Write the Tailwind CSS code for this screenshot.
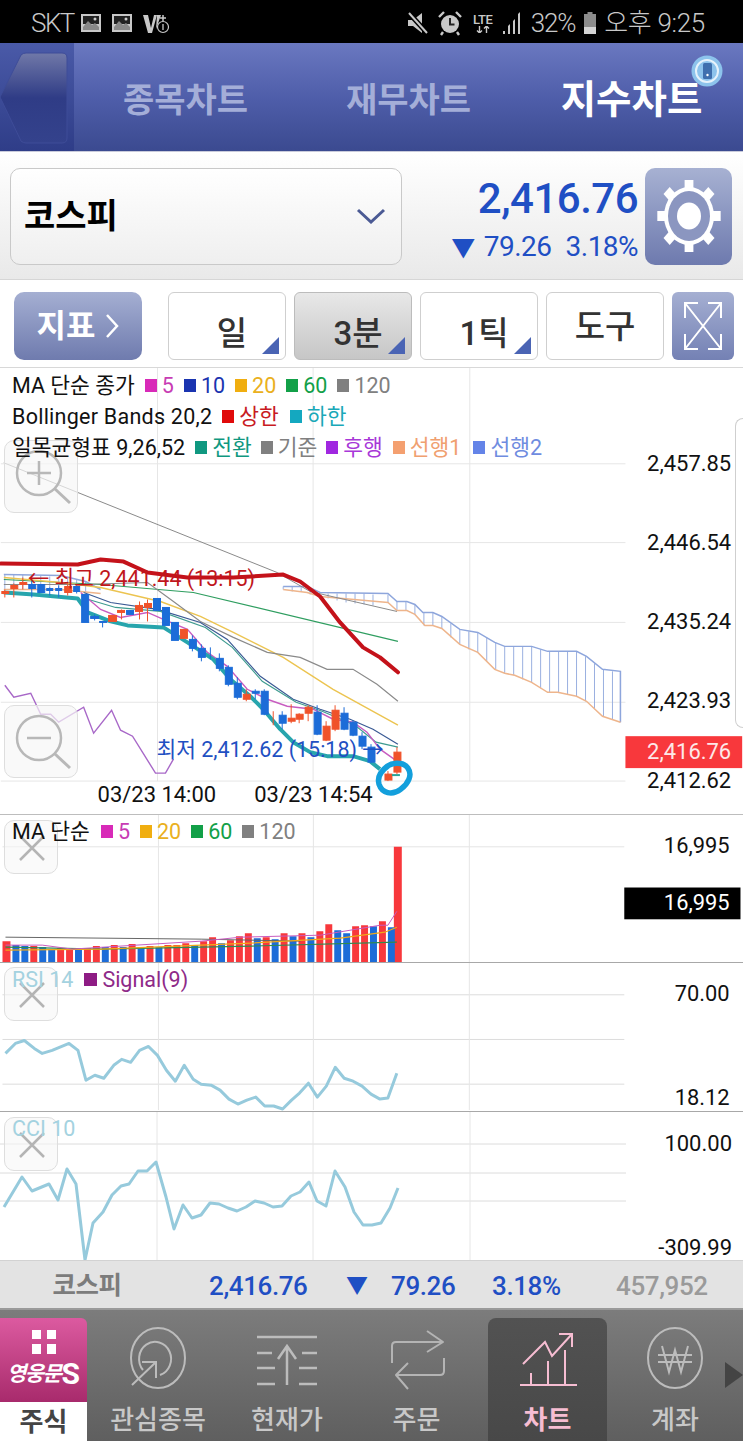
<!DOCTYPE html>
<html lang="ko">
<head>
<meta charset="utf-8">
<script src="https://cdn.jsdelivr.net/npm/@tailwindcss/browser@4"></script>
</head>
<body>
<div class="w-[743px] h-[1441px] overflow-hidden flex flex-col bg-white font-['Roboto','Noto_Sans_CJK_KR',sans-serif] relative">

  <!-- status bar -->
  <div class="h-[43px] bg-black flex items-center justify-between pl-[31px] pr-[38px] pt-[3px] text-[#c8c8c8] text-[26px] shrink-0">
    <div class="flex items-center gap-[6px]">
      <span class="tracking-[-1.500px] font-light">SKT</span>
      <svg width="22" height="20" viewBox="0 0 22 20"><rect x="1" y="1" width="20" height="18" fill="#c8c8c8"/><rect x="3" y="3" width="16" height="8" fill="#222"/><path d="M3 14l5-6 4 4 3-2 4 4v3H3z" fill="#888"/><circle cx="15" cy="6" r="1.500" fill="#ccc"/></svg>
      <svg class="ml-[3px]" width="22" height="20" viewBox="0 0 22 20"><rect x="1" y="1" width="20" height="18" fill="#c8c8c8"/><rect x="3" y="3" width="16" height="8" fill="#222"/><path d="M3 14l5-6 4 4 3-2 4 4v3H3z" fill="#888"/><circle cx="15" cy="6" r="1.500" fill="#ccc"/></svg>
      <svg class="ml-[3px]" width="30" height="24" viewBox="0 0 30 24"><path d="M1 4h5l3 13 3-13h3l-5 18H6z" fill="#c8c8c8"/><path d="M15 4h4l-5 14z" fill="#c8c8c8"/><path d="M21 4v6M18 7h6" stroke="#c8c8c8" stroke-width="1.500"/><circle cx="21" cy="16" r="5.500" fill="none" stroke="#c8c8c8" stroke-width="1.200"/><path d="M21 13v6" stroke="#c8c8c8" stroke-width="1.300"/></svg>
    </div>
    <div class="flex items-center">
      <svg width="24" height="24" viewBox="0 0 24 24"><path d="M2 9h5l9-7v20l-9-7H2z" fill="#c8c8c8"/><path d="M2 1l20 22" stroke="#000" stroke-width="5"/><path d="M3 2l18 20" stroke="#c8c8c8" stroke-width="2"/></svg>
      <svg class="ml-[8px]" width="24" height="26" viewBox="0 0 24 26"><circle cx="12" cy="14" r="9" fill="#c8c8c8"/><path d="M12 8v6.500h4.500" stroke="#222" stroke-width="2" fill="none"/><path d="M1 7l5-5M23 7l-5-5M5 22l-2 3M19 22l2 3" stroke="#c8c8c8" stroke-width="2.400"/></svg>
      <div class="ml-[9px] w-[24px] flex flex-col items-center leading-none">
        <span class="text-[13px] font-medium tracking-[-.5px]">LTE</span>
        <svg width="14" height="7" viewBox="0 0 14 7"><path d="M3.500 0v7M1 4.500l2.500 2.500 2.500-2.500M10.500 7V0M8 2.500L10.500 0 13 2.500" stroke="#c8c8c8" fill="none" stroke-width="1.400"/></svg>
      </div>
      <svg class="ml-[7px]" width="20" height="24" viewBox="0 0 20 24"><path d="M1 20h2v3H1zM6 15l2-2v10H6zM11 10l2-2v15h-2zM16 3l2-2v22h-2z" fill="#c8c8c8"/></svg>
      <span class="ml-[9px] tracking-[-1.200px] font-light">32%</span>
      <svg class="ml-[8px]" width="14" height="24" viewBox="0 0 14 24"><path d="M4.500 1h5v2h3.500v20H1V3h3.500z" fill="#8c8c8c"/><rect x="1" y="16" width="12" height="7" fill="#d4d4d4"/></svg>
      <span class="ml-[7px] tracking-[-.3px] font-light">오후 9:25</span>
    </div>
  </div>

  <!-- header tabs -->
  <div class="h-[109px] shrink-0 flex relative bg-linear-to-b from-[#6a78c0] via-[#4f5eaa] to-[#3b4a90] border-b border-[#c9cbdb]">
    <div class="w-[74px] bg-linear-to-b from-[#4a5aa8] to-[#2f3d88] shrink-0">
      <svg width="74" height="109" viewBox="0 0 74 109"><defs><linearGradient id="bk" x1="0" y1="0" x2="0" y2="1"><stop offset="0" stop-color="#7078a8"/><stop offset=".5" stop-color="#2f3c86"/><stop offset="1" stop-color="#34428c"/></linearGradient></defs><path d="M0 54L21 12Q23 10 26 10H62Q67 10 67 15V95Q67 100 62 100H26Q23 100 21 98Z" fill="url(#bk)" stroke="#3e4c98" stroke-width="1"/></svg>
    </div>
    <div class="flex-1 grid grid-cols-3 items-center text-center pt-[6px]">
      <span class="text-[34px] font-bold text-[#a4aed8] leading-none">종목차트</span>
      <span class="text-[34px] font-bold text-[#a4aed8] leading-none">재무차트</span>
      <span class="text-[38.500px] font-bold text-white leading-none">지수차트</span>
    </div>
    <svg class="absolute left-[691px] top-[12px]" width="32" height="32" viewBox="0 0 32 32"><circle cx="16" cy="16" r="15.500" fill="#8dc3ec"/><circle cx="16" cy="16" r="11" fill="none" stroke="#e6f2fb" stroke-width="2"/><rect x="12" y="8" width="9" height="16" rx="1.500" fill="#3f6fae"/><circle cx="16.500" cy="20" r="1.200" fill="#fff"/></svg>
  </div>

  <!-- select row -->
  <div class="h-[128px] shrink-0 flex items-center pl-[10px] pr-[11px] pt-[1px] bg-linear-to-b from-white to-[#e9e9e9] border-b border-[#d6d6d6]">
    <div class="w-[393px] h-[97px] rounded-[10px] border border-[#c9c9c9] bg-linear-to-b from-white to-[#efefef] flex items-center justify-between pl-[13px] pr-[15px]">
      <span class="text-[34px] font-bold text-black leading-none">코스피</span>
      <svg width="30" height="16" viewBox="0 0 30 16"><path d="M2 2l13 12L28 2" fill="none" stroke="#4b5a94" stroke-width="3"/></svg>
    </div>
    <div class="w-[236px] flex flex-col items-end text-[#1f4fc4] pt-[5px]">
      <span class="text-[42px] font-medium leading-[50px] tracking-[-.5px]">2,416.76</span>
      <div class="flex items-center text-[28px] leading-[30px] mt-[6px] tracking-[-.5px]">
        <span class="text-[24px] mr-[9px] mt-[4px]">▼</span><span>79.26</span><span class="ml-[14px]">3.18%</span>
      </div>
    </div>
    <div class="ml-[7px] w-[87px] h-[97px] rounded-[10px] bg-linear-to-b from-[#a7b1d2] to-[#6e7aae] flex items-center justify-center">
      <svg width="66" height="74" viewBox="0 0 66 74"><g transform="translate(33 37) scale(.88 1)" fill="#fff"><rect x="-5" y="-36" width="10" height="72"/><rect x="-5" y="-36" width="10" height="72" transform="rotate(45)"/><rect x="-5" y="-36" width="10" height="72" transform="rotate(90)"/><rect x="-5" y="-36" width="10" height="72" transform="rotate(135)"/></g><ellipse cx="33" cy="37" rx="25" ry="29" fill="#fff"/><ellipse cx="33" cy="37" rx="21" ry="25" fill="#8b96c0"/><ellipse cx="33" cy="37" rx="12" ry="13.500" fill="#fff"/></svg>
    </div>
  </div>

  <!-- toolbar -->
  <div class="h-[88px] shrink-0 flex items-center pl-[14px] pt-[4px] border-b border-[#d8d8d8] bg-white">
    <div class="w-[128px] h-[68px] rounded-[10px] bg-linear-to-b from-[#a5afd2] to-[#6f7bae] flex items-center justify-center gap-[10px] text-white">
      <span class="text-[32px] font-bold leading-none">지표</span>
      <svg width="14" height="26" viewBox="0 0 14 26"><path d="M2 2l10 11L2 24" fill="none" stroke="#fff" stroke-width="2.500"/></svg>
    </div>
    <div class="ml-[26px] flex gap-[8px]">
      <div class="relative w-[118px] h-[68px] rounded-[6px] border border-[#cfcfcf] bg-white flex items-center justify-center pl-[10px] pt-[15px] text-[33px] font-medium text-[#333] leading-none">일
        <svg class="absolute right-[6px] bottom-[5px]" width="17" height="17" viewBox="0 0 17 17"><path d="M17 0v17H0z" fill="#4a64b4"/></svg>
      </div>
      <div class="relative w-[118px] h-[68px] rounded-[6px] border border-[#bcbcbc] bg-linear-to-b from-[#e8e8e8] to-[#c6c6c6] flex items-center justify-center pl-[10px] pt-[15px] text-[33px] font-medium text-[#333] leading-none">3분
        <svg class="absolute right-[6px] bottom-[5px]" width="17" height="17" viewBox="0 0 17 17"><path d="M17 0v17H0z" fill="#4a64b4"/></svg>
      </div>
      <div class="relative w-[118px] h-[68px] rounded-[6px] border border-[#cfcfcf] bg-white flex items-center justify-center pl-[10px] pt-[15px] text-[33px] font-medium text-[#333] leading-none">1틱
        <svg class="absolute right-[6px] bottom-[5px]" width="17" height="17" viewBox="0 0 17 17"><path d="M17 0v17H0z" fill="#4a64b4"/></svg>
      </div>
      <div class="w-[118px] h-[68px] rounded-[6px] border border-[#cfcfcf] bg-white flex items-center justify-center pt-[2px] text-[33px] font-medium text-[#333] leading-none">도구</div>
    </div>
    <div class="ml-[8px] w-[62px] h-[68px] rounded-[6px] bg-linear-to-b from-[#a5afd2] to-[#7481b4] flex items-center justify-center">
      <svg width="40" height="50" viewBox="0 0 40 50"><g fill="none" stroke="#fff" stroke-width="2"><path d="M2 2l36 46M38 2L2 48"/><path d="M2 17V2h13M38 17V2H25M2 33v15h13M38 33v15H25"/></g></svg>
    </div>
  </div>

  <!-- main chart -->
  <div class="h-[447px] shrink-0 relative border-b border-[#bdbdbd]">
    <svg class="block w-full h-full" viewBox="0 368 743 447" font-family="Roboto,'Noto Sans CJK KR',sans-serif">
      <path d="M0 464H626M0 543H626M0 623H626M0 703H626M0 782H626" stroke="#e6e6e6" stroke-width="1"/>
      <path d="M157 368V782M313 368V782M470 368V782" stroke="#e6e6e6" stroke-width="1"/>

      <!-- cloud hatch -->
      <path d="M4 575V590M13 575V590M22 575V590M31 575V590M40 576V590M49 577V590M58 577V591M67 578V591M76 580V592M85 582V593M283 587V590M292 587V592M301 587V592M310 590V595M319 593V597M328 594V599M337 594V601M346 594V603M355 594V604M364 594V605M373 595V606M388 595V603M397 602V611M406 602V611M415 605V615M424 613V626M433 613V626M442 617V629M451 624V638M460 630V645M469 632V650M478 633V653M487 638V662M496 643V670M505 647V674M514 647V676M523 647V680M532 647V683M541 650V689M550 652V693M559 652V693M568 652V695M577 652V697M586 657V702M595 664V710M604 670V717M613 672V720M621 672V723" stroke="#9ab0e0" stroke-width="1" fill="none"/>
      <polyline points="3,575 60,576 85,582 100,590" fill="none" stroke="#8ea6dc" stroke-width="1.500"/>
      <polyline points="3,590 60,590 100,594" fill="none" stroke="#eeb58c" stroke-width="1.500"/>
      <polyline points="283,587 307,587 320,593 388,594 397,602 407,602 415,605 423,613 433,613 442,617 460,630 478,633 495,643 505,647 532,647 548,652 577,652 587,657 603,670 621,672 621,723" fill="none" stroke="#8ea6dc" stroke-width="1.500"/>
      <polyline points="283,590 307,593 320,597 388,603 397,611 407,611 415,615 425,626 433,626 442,629 460,645 478,653 495,670 505,674 515,676 532,683 548,693 558,693 577,697 587,702 603,717 621,723" fill="none" stroke="#eeb58c" stroke-width="1.500"/>

      <!-- lines -->
      <polyline points="3,463 277,573 310,592 397,612" fill="none" stroke="#8a8a8a" stroke-width="1"/>
      <polyline points="3,580 100,585 193,593 398,642" fill="none" stroke="#2f9e60" stroke-width="1.200"/>
      <polyline points="3,578 60,583 100,588 160,602 200,617 233,633 283,658 333,690 398,726" fill="none" stroke="#ecc450" stroke-width="1.400"/>
      <polyline points="3,585 80,585 147,583 173,602 200,622 233,638 267,653 300,658 327,670 353,670 377,685 398,702" fill="none" stroke="#8a8a8a" stroke-width="1.200"/>
      <polyline points="4,686 13,698 30,694 40,715 50,715 58,723 83,708 93,734 111,711 120,731 132,737 155,774 165,774 173,760" fill="none" stroke="#a868c8" stroke-width="1.400"/>
      <polyline points="83,593 110,603 157,610 200,623 227,640 260,677 293,700 320,710 350,720 373,730 398,745" fill="none" stroke="#3a5a94" stroke-width="1.200"/>
      <polyline points="88,600 115,608 160,612 205,628 232,648 262,682 296,703 322,712 355,726 376,743 398,748" fill="none" stroke="#3f9c90" stroke-width="1.200"/>
      <polyline points="80,593 100,610 120,618 147,613 163,620 187,630 207,653 227,667 247,690 267,700 287,707 313,710 333,720 353,723 367,733 380,750 397,762" fill="none" stroke="#c85cc0" stroke-width="1.400"/>

      <!-- lower band -->
      <polyline points="3,593 33,595 77,599 87,613 110,622 127,626 163,628 187,643 213,660 230,680 250,697 263,710 280,730 293,743 310,753 327,757 353,757 370,762 380,770" fill="none" stroke="#27a5ad" stroke-width="4" stroke-linejoin="round"/>

      <!-- candles blue -->
      <g stroke="#1c6cd8" stroke-width="1" fill="#1c6cd8">
        <path d="M31 581V598M49 588V596M58 586V598M76 586V594M94 615V621M102 622V628M255 690V700M192 636V652M201 645V662M210 648V660M219 654V672M228 666V687M237 678V700M264 690V716M282 712V730M317 706V736M344 708V731M353 721V737M362 733V750M371 745V764" fill="none"/>
        <rect x="28" y="585" width="7" height="4"/><rect x="37" y="585" width="7" height="8"/><rect x="46" y="589" width="6" height="2"/><rect x="55" y="589" width="6" height="2"/><rect x="73" y="587" width="6" height="5"/>
        <rect x="81" y="595" width="7" height="28"/><rect x="90" y="617" width="8" height="2"/><rect x="99" y="622" width="7" height="1"/><rect x="126" y="611" width="7" height="4"/>
        <rect x="153" y="599" width="7" height="12"/><rect x="162" y="608" width="7" height="18"/><rect x="171" y="623" width="7" height="18"/><rect x="189" y="640" width="7" height="9"/><rect x="198" y="649" width="7" height="9"/><rect x="216" y="659" width="7" height="10"/><rect x="225" y="668" width="7" height="17"/><rect x="234" y="684" width="7" height="14"/><rect x="252" y="692" width="7" height="2"/><rect x="261" y="692" width="7" height="23"/><rect x="279" y="716" width="7" height="8"/><rect x="314" y="713" width="7" height="22"/><rect x="341" y="714" width="7" height="16"/><rect x="350" y="723" width="7" height="13"/><rect x="359" y="737" width="7" height="10"/><rect x="368" y="748" width="7" height="15"/>
      </g>
      <!-- candles orange -->
      <g stroke="#f0522a" stroke-width="1" fill="#f0522a">
        <path d="M4 590V598M13 584V598M22 578V590M67 584V596M121 610V620M139 602V620M147 600V622M246 690V702M273 712V726M291 705V724M299 714V724M308 706V722M326 722V742M335 706V732M388 772V782M397 748V775" fill="none"/>
        <rect x="1" y="592" width="7" height="2"/><rect x="10" y="586" width="7" height="3"/><rect x="19" y="583" width="7" height="2"/><rect x="64" y="587" width="7" height="6"/>
        <rect x="108" y="616" width="8" height="6"/><rect x="117" y="611" width="7" height="2"/><rect x="135" y="606" width="7" height="6"/><rect x="144" y="604" width="7" height="4"/>
        <rect x="180" y="630" width="7" height="9"/><rect x="243" y="695" width="7" height="5"/><rect x="288" y="719" width="7" height="3"/><rect x="296" y="715" width="7" height="5"/><rect x="305" y="708" width="7" height="6"/><rect x="323" y="727" width="7" height="14"/><rect x="332" y="711" width="7" height="19"/><rect x="385" y="775" width="7" height="6"/><rect x="394" y="753" width="7" height="20"/>
      </g>
      <path d="M392 776h8" stroke="#2aa59a" stroke-width="2"/>

      <!-- upper band -->
      <polyline points="0,564 77,565 100,560 123,562 147,573 187,578 233,578 283,575 300,582 320,597 340,623 363,648 380,658 398,673" fill="none" stroke="#c4121a" stroke-width="4" stroke-linejoin="round" stroke-linecap="round"/>

      <!-- annotations -->
      <text x="27" y="587" font-size="21.500" fill="#c0161c">←  최고 2,441.44 (13:15)</text>
      <text x="156" y="758" font-size="21.500" fill="#1f50c2">최저 2,412.62 (15:18) →</text>
      <text x="97" y="803" font-size="22" fill="#111">03/23 14:00</text>
      <text x="254" y="803" font-size="22" fill="#111">03/23 14:54</text>

      <!-- hand drawn ring -->
      <path d="M384 770C390 763 403 762 408 769C413 776 408 785 401 790C392 797 382 794 379 785C377 778 381 772 388 767" fill="none" stroke="#139fdc" stroke-width="5.500" stroke-linecap="round"/>

      <!-- y axis -->
      <g font-size="22" fill="#111" text-anchor="end">
        <text x="732" y="471">2,457.85</text>
        <text x="732" y="550">2,446.54</text>
        <text x="732" y="630">2,435.24</text>
        <text x="732" y="709">2,423.93</text>
        <text x="732" y="789">2,412.62</text>
      </g>
      <rect x="626" y="737" width="117" height="32" fill="#f8383c"/>
      <text x="732" y="760" font-size="22" fill="#fde8e8" text-anchor="end">2,416.76</text>
    </svg>

    <!-- zoom buttons -->
    <div class="absolute left-[4px] top-[72px] w-[74px] h-[73px] rounded-[10px] border border-[#dedede] bg-[#f6f6f6]/70">
      <svg width="74" height="73" viewBox="0 0 74 73"><circle cx="34" cy="32" r="22" fill="none" stroke="#b8b8b8" stroke-width="2.500"/><path d="M50 48l15 14" stroke="#b8b8b8" stroke-width="3"/><path d="M22 32h24M34 20v24" stroke="#b8b8b8" stroke-width="2.500"/></svg>
    </div>
    <div class="absolute left-[4px] top-[337px] w-[74px] h-[73px] rounded-[10px] border border-[#dedede] bg-[#f6f6f6]/70">
      <svg width="74" height="73" viewBox="0 0 74 73"><circle cx="34" cy="32" r="22" fill="none" stroke="#b8b8b8" stroke-width="2.500"/><path d="M50 48l15 14" stroke="#b8b8b8" stroke-width="3"/><path d="M22 32h24" stroke="#b8b8b8" stroke-width="2.500"/></svg>
    </div>

    <!-- legends -->
    <div class="absolute left-[12px] top-[2px] flex flex-col text-[21.500px] leading-[31px] text-[#111] whitespace-nowrap">
      <div class="flex items-center">
        <span>MA 단순 종가</span>
        <span class="ml-[10px] w-[12px] h-[13px] bg-[#d82ab8]"></span><span class="ml-[5px] text-[#c83cb4]">5</span>
        <span class="ml-[10px] w-[12px] h-[13px] bg-[#1a34b0]"></span><span class="ml-[5px] text-[#1a34b0]">10</span>
        <span class="ml-[10px] w-[12px] h-[13px] bg-[#f0ae10]"></span><span class="ml-[5px] text-[#eab020]">20</span>
        <span class="ml-[10px] w-[12px] h-[13px] bg-[#12a048]"></span><span class="ml-[5px] text-[#12a048]">60</span>
        <span class="ml-[10px] w-[12px] h-[13px] bg-[#808080]"></span><span class="ml-[5px] text-[#808080]">120</span>
      </div>
      <div class="flex items-center">
        <span class="tracking-[.25px]">Bollinger Bands 20,2</span>
        <span class="ml-[10px] w-[12px] h-[13px] bg-[#e00a0a]"></span><span class="ml-[5px] text-[#c81a22]">상한</span>
        <span class="ml-[11px] w-[12px] h-[13px] bg-[#14a8c0]"></span><span class="ml-[5px] text-[#1aa8b8]">하한</span>
      </div>
      <div class="flex items-center">
        <span>일목균형표 9,26,52</span>
        <span class="ml-[10px] w-[12px] h-[13px] bg-[#109880]"></span><span class="ml-[5px] text-[#109880]">전환</span>
        <span class="ml-[9px] w-[12px] h-[13px] bg-[#808080]"></span><span class="ml-[5px] text-[#808080]">기준</span>
        <span class="ml-[9px] w-[12px] h-[13px] bg-[#a028e0]"></span><span class="ml-[5px] text-[#a838d8]">후행</span>
        <span class="ml-[10px] w-[12px] h-[13px] bg-[#f4a070]"></span><span class="ml-[5px] text-[#f0a070]">선행1</span>
        <span class="ml-[12px] w-[12px] h-[13px] bg-[#6484e8]"></span><span class="ml-[5px] text-[#6f8ce0]">선행2</span>
      </div>
    </div>

    <!-- right handle -->
    <div class="absolute right-0 top-[50px] w-[8px] h-[310px] bg-white border-l border-y border-[#cfcfcf] rounded-l-[8px]"></div>
  </div>

  <!-- volume -->
  <div class="h-[148px] shrink-0 relative border-b border-[#a8a8a8]">
    <svg class="block w-full h-full" viewBox="0 815 743 148" font-family="Roboto,'Noto Sans CJK KR',sans-serif">
      <path d="M0 847H626" stroke="#e4e4e4"/>
      <path d="M157 815V963M313 815V963M470 815V963" stroke="#e6e6e6"/>
      <g fill="#f8383c">
        <path d="M0 942h8V963H0zM28 947h7V963h-7zM55 949h7V963h-7zM64 949h7V963h-7zM82 949h7V963h-7zM91 947h7V963h-7zM109 946h7V963h-7zM127 945h7V963h-7zM145 947h7V963h-7zM163 946h7V963h-7zM172 946h7V963h-7zM181 944h7V963h-7zM199 942h7V963h-7zM208 938h7V963h-7zM226 941h7V963h-7zM235 937h7V963h-7zM244 934h7V963h-7zM262 938h7V963h-7zM280 934h7V963h-7zM298 934h7V963h-7zM316 932h7V963h-7zM325 925h7V963h-7zM352 927h7V963h-7zM361 926h7V963h-7zM379 922h7V963h-7zM394 847h8V963h-8z"/>
      </g>
      <g fill="#1c6cd8">
        <path d="M10 946h7V963h-7zM19 947h7V963h-7zM37 948h7V963h-7zM46 950h7V963h-7zM73 949h7V963h-7zM100 948h7V963h-7zM118 948h7V963h-7zM136 948h7V963h-7zM154 948h7V963h-7zM190 946h7V963h-7zM217 944h7V963h-7zM253 939h7V963h-7zM271 940h7V963h-7zM289 937h7V963h-7zM307 938h7V963h-7zM334 931h7V963h-7zM343 934h7V963h-7zM370 927h7V963h-7zM388 928h7V963h-7z"/>
      </g>
      <polyline points="3,938 200,940 300,942" fill="none" stroke="#666" stroke-width="1"/>
      <polyline points="3,948 100,950 250,947 397,943" fill="none" stroke="#2f8a50" stroke-width="1.200"/>
      <polyline points="3,951 100,950 250,944 340,939 385,933 397,928" fill="none" stroke="#f0a818" stroke-width="1.200"/>
      <polyline points="3,946 40,946 70,950 200,942 240,938 320,936 380,926 388,926 397,912" fill="none" stroke="#c85cc0" stroke-width="1"/>
      <text x="732" y="853" font-size="22" fill="#111" text-anchor="end">16,995</text>
      <rect x="626" y="888" width="117" height="32" fill="#000"/>
      <text x="732" y="911" font-size="22" fill="#fff" text-anchor="end">16,995</text>
    </svg>
    <div class="absolute left-[4px] top-[5px] w-[54px] h-[54px] rounded-[10px] border border-[#dedede] bg-[#f6f6f6]/60">
      <svg width="54" height="54" viewBox="0 0 54 54"><path d="M15 15l24 24M39 15L15 39" stroke="#b4b4b4" stroke-width="2.500"/></svg>
    </div>
    <div class="absolute left-[12px] top-[1px] flex items-center text-[21.500px] leading-[31px] text-[#111] whitespace-nowrap">
      <span>MA 단순</span>
      <span class="ml-[11px] w-[12px] h-[13px] bg-[#d82ab8]"></span><span class="ml-[5px] text-[#c83cb4]">5</span>
      <span class="ml-[10px] w-[12px] h-[13px] bg-[#f0ae10]"></span><span class="ml-[5px] text-[#eab020]">20</span>
      <span class="ml-[10px] w-[12px] h-[13px] bg-[#12a048]"></span><span class="ml-[5px] text-[#12a048]">60</span>
      <span class="ml-[10px] w-[12px] h-[13px] bg-[#808080]"></span><span class="ml-[5px] text-[#808080]">120</span>
    </div>
  </div>

  <!-- RSI -->
  <div class="h-[149px] shrink-0 relative border-b border-[#a8a8a8]">
    <svg class="block w-full h-full" viewBox="0 964 743 149" font-family="Roboto,'Noto Sans CJK KR',sans-serif">
      <path d="M0 996H626M0 1041H626M0 1086H626" stroke="#dcdcdc"/>
      <path d="M157 964V1112M313 964V1112M470 964V1112" stroke="#e6e6e6"/>
      <polyline points="3,1055 13,1045 22,1042 32,1050 40,1055 50,1052 67,1045 76,1052 84,1082 93,1077 102,1080 112,1067 120,1061 129,1064 138,1052 147,1048 156,1057 165,1072 174,1083 183,1067 192,1081 200,1086 210,1087 219,1092 228,1101 237,1106 246,1102 255,1099 264,1108 273,1108 282,1111 291,1102 299,1095 308,1085 317,1099 326,1088 335,1069 344,1080 353,1083 362,1088 371,1096 380,1101 388,1100 397,1075" fill="none" stroke="#96cadc" stroke-width="3" stroke-linejoin="round"/>
      <text x="732" y="1002" font-size="22" fill="#111" text-anchor="end">70.00</text>
      <text x="732" y="1107" font-size="22" fill="#111" text-anchor="end">18.12</text>
    </svg>
    <div class="absolute left-[4px] top-[4px] w-[54px] h-[54px] rounded-[10px] border border-[#dedede] bg-[#f6f6f6]/60">
      <svg width="54" height="54" viewBox="0 0 54 54"><path d="M15 15l24 24M39 15L15 39" stroke="#b4b4b4" stroke-width="2.500"/></svg>
    </div>
    <div class="absolute left-[12px] top-[1px] flex items-center text-[21.500px] leading-[31px] whitespace-nowrap">
      <span class="text-[#a4d2e0]">RSI 14</span>
      <span class="ml-[11px] w-[13px] h-[13px] bg-[#8e1c84]"></span><span class="ml-[5px] text-[#8e2a88]">Signal(9)</span>
    </div>
  </div>

  <!-- CCI -->
  <div class="h-[148px] shrink-0 relative">
    <svg class="block w-full h-full" viewBox="0 1112 743 148" font-family="Roboto,'Noto Sans CJK KR',sans-serif">
      <path d="M0 1144H626M0 1173H626M0 1201H626" stroke="#dcdcdc"/>
      <path d="M157 1112V1260M313 1112V1260M470 1112V1260" stroke="#e6e6e6"/>
      <polyline points="4,1207 22,1177 32,1191 49,1184 58,1200 67,1169 76,1184 85,1260 93,1223 103,1212 112,1195 121,1186 129,1184 138,1171 147,1171 156,1162 166,1197 174,1229 183,1205 192,1218 201,1215 210,1203 219,1204 228,1208 237,1211 246,1207 255,1201 264,1203 273,1207 282,1206 291,1196 300,1192 309,1182 317,1201 326,1206 335,1171 345,1187 354,1212 363,1225 372,1225 381,1223 390,1208 398,1188" fill="none" stroke="#96cadc" stroke-width="3" stroke-linejoin="round"/>
      <text x="732" y="1151" font-size="22" fill="#111" text-anchor="end">100.00</text>
      <text x="732" y="1255" font-size="22" fill="#111" text-anchor="end">-309.99</text>
    </svg>
    <div class="absolute left-[4px] top-[5px] w-[54px] h-[54px] rounded-[10px] border border-[#dedede] bg-[#f6f6f6]/60">
      <svg width="54" height="54" viewBox="0 0 54 54"><path d="M15 15l24 24M39 15L15 39" stroke="#b4b4b4" stroke-width="2.500"/></svg>
    </div>
    <div class="absolute left-[12px] top-[1px] text-[21.500px] leading-[31px] text-[#a4d2e0]">CCI 10</div>
  </div>

  <!-- summary strip -->
  <div class="h-[50px] shrink-0 bg-[#e3e3e3] border-t border-[#d2d2d2] border-b-2 border-b-[#9a9a9a] flex items-center pt-[2px] text-[26px] font-medium text-[#1f4fc4] leading-none tracking-[-.4px]">
    <span class="w-[174px] text-center text-[#7c7c7c] font-bold text-[25.500px]">코스피</span>
    <span class="ml-[35px] w-[100px]">2,416.76</span>
    <span class="ml-[37px] w-[45px] text-[22px]">▼</span>
    <span class="w-[101px]">79.26</span>
    <span class="w-[124px]">3.18%</span>
    <span class="text-[#9a9a9a]">457,952</span>
  </div>

  <!-- bottom nav -->
  <div class="flex-1 flex bg-linear-to-b from-[#7c7c7c] to-[#5f5f5f] pt-[8px] text-[#c8c8c8] text-[26px] font-medium leading-none relative">
    <div class="w-[87px] shrink-0 flex flex-col">
      <div class="h-[84px] rounded-tr-[6px] bg-linear-to-b from-[#dc5aa0] to-[#a82a6c] flex flex-col items-center pt-[12px]">
        <svg width="24" height="24" viewBox="0 0 24 24"><path d="M0 0h9v9H0zM15 0h9v9h-9zM0 14h9v10H0zM15 14h9v10h-9z" fill="#fff"/></svg>
        <span class="mt-[8px] flex items-center text-white font-bold leading-none">
          <span class="font-['Liberation_Serif','Noto_Sans_CJK_KR',serif] text-[21px] tracking-[-1.500px] italic">영웅문</span><span class="ml-[1px] text-[30px] leading-[24px]">S</span>
        </span>
      </div>
      <div class="flex-1 bg-white text-[#444] flex items-center justify-center font-bold">주식</div>
    </div>
    <div class="w-[142px] flex flex-col items-center">
      <svg width="60" height="64" viewBox="0 0 60 64" class="mt-[2px] translate-y-[7px]"><g fill="none" stroke="#bcbcbc" stroke-width="2"><ellipse cx="30" cy="31" rx="27" ry="30"/><path d="M15 43A16 17 0 1 1 32 48"/><path d="M4 58L28 35M14 35H28V51"/></g></svg>
      <span class="mt-[23px]">관심종목</span>
    </div>
    <div class="w-[116px] flex flex-col items-center">
      <svg width="62" height="64" viewBox="0 0 62 64" class="mt-[2px] translate-y-[7px]"><g fill="none" stroke="#bcbcbc" stroke-width="2.500"><path d="M1 10h60M1 26h15M46 26h15M1 41h18M43 41h18M1 57h18M43 57h18M31 58V20M22 32l9-13 9 13"/></g></svg>
      <span class="mt-[23px]">현재가</span>
    </div>
    <div class="w-[143px] flex flex-col items-center">
      <svg width="56" height="64" viewBox="0 0 56 64" class="mt-[2px] translate-y-[7px]"><g fill="none" stroke="#b4b4b4" stroke-width="2" stroke-linejoin="round"><path d="M3 36V19q0-4 4-4H54M38 4l16 11-16 10"/><path d="M55 31V44q0 4-4 4H7M19 36L7 48l12 14"/></g></svg>
      <span class="mt-[23px]">주문</span>
    </div>
    <div class="w-[119px] flex flex-col items-center rounded-t-[8px] bg-linear-to-b from-[#525252] to-[#484848] text-[#f6bdd2] font-bold">
      <svg width="60" height="64" viewBox="0 0 60 64" class="mt-[2px] translate-y-[7px]"><g fill="none" stroke="#f6bdd2" stroke-width="2"><path d="M2 58H59M13 58V46M30 58V34M47 58V23"/><path d="M5 37L27 15l7 14L54 7M41 7H54V20"/></g></svg>
      <span class="mt-[23px]">차트</span>
    </div>
    <div class="w-[136px] flex flex-col items-center">
      <svg width="58" height="64" viewBox="0 0 58 64" class="mt-[2px] translate-y-[7px]"><g fill="none" stroke="#bcbcbc" stroke-width="2"><ellipse cx="29" cy="31" rx="27" ry="30"/><path d="M16 19l7 26 6-22 6 22 7-26M12 28h34M12 35h34"/></g></svg>
      <span class="mt-[23px]">계좌</span>
    </div>
    <svg class="absolute left-[725px] top-[52px]" width="18" height="26" viewBox="0 0 18 26"><path d="M0 0l18 13L0 26z" fill="#444"/></svg>
  </div>
</div>
</body>
</html>
